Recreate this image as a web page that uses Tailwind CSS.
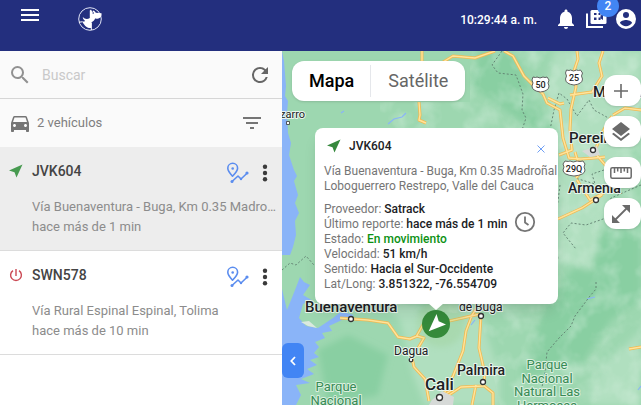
<!DOCTYPE html>
<html lang="es">
<head>
<meta charset="utf-8">
<meta name="viewport" content="width=device-width, initial-scale=1">
<title>Satrack</title>
<script src="https://cdn.jsdelivr.net/npm/@tailwindcss/browser@4"></script>
</head>
<body class="flex h-screen flex-col overflow-hidden bg-white font-[Roboto,sans-serif]">
<svg class="hidden" aria-hidden="true">
  <symbol id="nav" viewBox="0 0 14 14"><path d="M13.500.5 0 6.500l5.500 1.700L7.500 13.500z"/></symbol>
  <symbol id="route" viewBox="0 0 24 24"><g fill="none" stroke="currentColor" stroke-width="1.600" stroke-linecap="round" stroke-linejoin="round"><path d="M7.500 15.200C4.200 11.500 2.800 9.300 2.800 7.200a4.900 4.900 0 0 1 9.800 0c0 2.100-1.800 4.600-5.100 8z"/><path d="M7 20.500l6-5.500 3 3 6.300-6"/></g><g fill="currentColor"><circle cx="7.700" cy="7.500" r="1.300"/><circle cx="7" cy="20.500" r="1.500"/><circle cx="22" cy="12" r="1.600"/><circle cx="16" cy="18" r="1.200"/></g></symbol>
  <symbol id="dots" viewBox="0 0 24 24"><circle cx="12" cy="5.800" r="2.200"/><circle cx="12" cy="12" r="2.200"/><circle cx="12" cy="18.200" r="2.200"/></symbol>
</svg>

<header class="relative z-10 flex h-[51px] shrink-0 items-start bg-[#232f7e] pt-[7px] pr-[3px] pl-[18px] text-white">
  <button aria-label="Menú" class="-mt-1"><svg class="size-6" viewBox="0 0 24 24" fill="currentColor"><path d="M3 18h18v-2H3zm0-5h18v-2H3zm0-7v2h18V6z"/></svg></button>
  <a href="#" aria-label="Inicio" class="ml-9"><svg class="size-6" viewBox="0 0 24 24"><circle cx="12" cy="12" r="11.300" fill="none" stroke="#dfe3f5" stroke-width="1"/><path fill="#fff" d="M11.800 3.500 13 2.600l1.500 2.700.5-1.800c1.200.3 2.200 1.200 2.800 2.200l5.700.6c.3 1.800-.2 3.200-1.200 4.200-1.500 1.200-3.500 1.400-5.200 1.100-.6 1.800-2 3-3.600 3.800l-.2 5.600c-2.800.2-4.700-.6-6-2-1.400-1.500-2.200-3.300-3.300-4.500 1.300.2 2.400 0 3.100-.6-1.400-1-2.200-2.300-2.300-3.900 1.700 2 4.500 2.600 7 1z"/><path d="M13.300 16v7M1 15.200l3.300-.4" stroke="#fff" stroke-width="1"/><circle cx="15.200" cy="6" r=".8" fill="#232f7e"/></svg></a>
  <time class="mt-[5px] ml-auto text-xs leading-4 font-medium">10:29:44 a. m.</time>
  <div class="ml-[17px] flex gap-[6px]">
    <button aria-label="Notificaciones"><svg class="size-6" viewBox="0 0 24 24" fill="currentColor"><path d="M12 22c1.100 0 2-.9 2-2h-4c0 1.100.89 2 2 2zm6-6v-5c0-3.070-1.640-5.640-4.500-6.320V4c0-.83-.67-1.500-1.500-1.500s-1.500.67-1.500 1.500v.68C7.630 5.360 6 7.920 6 11v5l-2 2v1h16v-1z"/></svg></button>
    <button aria-label="Videos, 2 nuevos" class="relative"><svg class="size-6" viewBox="0 0 24 24"><path fill="none" stroke="currentColor" stroke-width="2" d="M3 6.500v13.500h16"/><path fill="currentColor" d="M8 3h13a1.500 1.500 0 0 1 1.500 1.500v11A1.500 1.500 0 0 1 21 17H8a1.500 1.500 0 0 1-1.500-1.500v-11A1.500 1.500 0 0 1 8 3z"/><path fill="#232f7e" d="M10 6h6.500v2.700L19 7v6l-2.500-1.700V13H10z"/><path fill="currentColor" d="M10 8h2.500V6h2v2h2v2.500h-2V13h-2v-2.500H10z"/></svg><span class="absolute -top-3 left-[13px] flex size-[22px] items-center justify-center rounded-full bg-[#4285f4] text-xs font-medium">2</span></button>
    <button aria-label="Cuenta"><svg class="size-6" viewBox="0 0 24 24" fill="currentColor"><path d="M12 2a10 10 0 1 0 0 20 10 10 0 0 0 0-20zm0 3a3 3 0 1 1 0 6 3 3 0 0 1 0-6zm0 14.200c-2.500 0-4.710-1.280-6-3.220.03-1.990 4-3.080 6-3.080 1.990 0 5.970 1.090 6 3.080-1.290 1.940-3.500 3.220-6 3.220z"/></svg></button>
  </div>
</header>

<div class="flex min-h-0 flex-1">
  <aside class="flex w-[282px] shrink-0 flex-col bg-white">
    <form class="flex h-12 items-center border-b border-[#d6d6d6] bg-[#fafafa] pr-[10px] pl-2">
      <label for="q" aria-label="Buscar"><svg class="size-6" viewBox="0 0 24 24" fill="#919191"><path d="M15.500 14h-.79l-.28-.27A6.471 6.471 0 0 0 16 9.500 6.500 6.500 0 1 0 9.500 16c1.610 0 3.090-.59 4.230-1.570l.27.28v.79l5 4.990L20.490 19l-4.990-5zm-6 0C7.010 14 5 11.990 5 9.500S7.010 5 9.500 5 14 7.010 14 9.500 11.990 14 9.500 14z"/></svg></label>
      <input id="q" type="search" placeholder="Buscar" class="ml-[10px] min-w-0 flex-1 bg-transparent text-sm text-[#666] outline-none placeholder:text-[#c9c9c9]">
      <button type="button" aria-label="Actualizar"><svg class="size-6" viewBox="0 0 24 24" fill="#666"><path d="M17.650 6.350A7.958 7.958 0 0 0 12 4a8 8 0 1 0 7.730 10h-2.080A5.990 5.990 0 0 1 12 18c-3.310 0-6-2.690-6-6s2.690-6 6-6c1.660 0 3.140.69 4.220 1.780L13 11h7V4z"/></svg></button>
    </form>
    <div class="flex h-12 items-center bg-[#fafafa] pr-[18px] pl-2">
      <svg class="size-6" viewBox="0 0 24 24" fill="#757575"><path d="M18.920 6.010C18.720 5.420 18.160 5 17.500 5h-11c-.66 0-1.210.42-1.420 1.010L3 12v8c0 .55.45 1 1 1h1c.55 0 1-.45 1-1v-1h12v1c0 .55.45 1 1 1h1c.55 0 1-.45 1-1v-8zM6.500 16c-.83 0-1.500-.67-1.500-1.500S5.670 13 6.500 13s1.500.67 1.500 1.500S7.330 16 6.500 16zm11 0c-.83 0-1.500-.67-1.500-1.500s.67-1.500 1.500-1.500 1.500.67 1.500 1.500-.67 1.500-1.500 1.500zM5 11l1.500-4.500h11L19 11z"/></svg>
      <span class="ml-[5px] text-[13px] text-[#808080]">2 vehículos</span>
      <button aria-label="Filtrar" class="ml-auto"><svg class="size-6" viewBox="0 0 24 24" fill="#757575"><path d="M10 18h4v-2h-4zM3 6v2h18V6zm3 7h12v-2H6z"/></svg></button>
    </div>
    <ul>
      <li class="flex h-[104px] flex-col border-b border-[#dcdcdc] bg-[#ededed] pt-[10px] pr-[5px] pl-[9px]">
        <div class="flex items-center">
          <svg class="size-[14px]" fill="#479a50"><use href="#nav"/></svg>
          <h2 class="ml-[9px] text-sm font-medium text-[#444]">JVK604</h2>
          <button aria-label="Recorrido de JVK604" class="mt-1 ml-auto text-[#5b8def]"><svg class="size-6"><use href="#route"/></svg></button>
          <button aria-label="Opciones de JVK604" class="mt-1 ml-1"><svg class="size-6" fill="#3a3a3a"><use href="#dots"/></svg></button>
        </div>
        <div class="mt-3 ml-[23px] text-[13px] leading-5 text-[#8c8c8c]"><p class="truncate">Vía Buenaventura - Buga, Km 0.35 Madroñal</p><p>hace más de 1 min</p></div>
      </li>
      <li class="flex h-[104px] flex-col border-b border-[#dcdcdc] bg-white pt-[10px] pr-[5px] pl-[9px]">
        <div class="flex items-center">
          <svg class="size-[14px]" viewBox="0 0 14 14" fill="none" stroke="#cb4a55" stroke-width="1.400"><path d="M7 1v7M4 2.600a5.400 5.400 0 1 0 6 0"/></svg>
          <h2 class="ml-[9px] text-sm font-medium text-[#444]">SWN578</h2>
          <button aria-label="Recorrido de SWN578" class="mt-1 ml-auto text-[#5b8def]"><svg class="size-6"><use href="#route"/></svg></button>
          <button aria-label="Opciones de SWN578" class="mt-1 ml-1"><svg class="size-6" fill="#3a3a3a"><use href="#dots"/></svg></button>
        </div>
        <div class="mt-3 ml-[23px] text-[13px] leading-5 text-[#8c8c8c]"><p class="truncate">Vía Rural Espinal Espinal, Tolima</p><p>hace más de 10 min</p></div>
      </li>
    </ul>
  </aside>

  <main class="relative min-w-0 flex-1 overflow-hidden bg-[#9dd7b0]">
    <svg class="absolute inset-0 h-full w-full" viewBox="282 51 359 354" preserveAspectRatio="xMinYMin slice" role="img" aria-label="Mapa del Valle del Cauca">
      <defs>
        <filter id="relief" x="0" y="0" width="100%" height="100%"><feTurbulence type="fractalNoise" baseFrequency=".05 .045" numOctaves="3" seed="8" result="n"/><feColorMatrix values="0 0 0 0 .78  0 0 0 0 .92  0 0 0 0 .83  2 0 0 0 -.85"/><feComposite in2="SourceAlpha" operator="in"/></filter>
        <filter id="soft" x="-20%" y="-20%" width="140%" height="140%"><feGaussianBlur stdDeviation="3"/></filter>
      </defs>
      <path fill="#9dd7b0" d="M282 51h359v354H282z"/>
      <g filter="url(#soft)">
        <path fill="#89cfa2" d="M480 51l34 0 20 50 20 30-14 4-70-50zM606 225l35-15v90l-30 20-30 45-40 10h-20l25-70zM555 310l20-30 20 20-20 50-30 20-20-10zM318 350l30-15 40 20-10 40-50 10z"/>
        <path fill="#b0dfbf" d="M555 51h86v80l-30 60-20 80-33-10V130l-14-40zM400 320l50-15 30 10 20 60v30h-75l-12-30zM600 370l41-40v75h-50zM380 300l40 5-6 30z"/>
      </g>
      <path opacity=".4" filter="url(#relief)" d="M470 51h171v354H500l-20-90-60-5-40-10V102h90z"/>
      <path fill="#8ab4f8" d="M282 51l2 10 2 25-1 10 3 5-1 12 1 20 3 10-2 12 5 15 3 6-3 5 4 14-3 8 4 10-4 8 1 14-3 12-11 30z"/>
      <path fill="#9dd7b0" d="M282 255h33v34h-33z"/>
      <path fill="#8ab4f8" d="M282 289l5 21 8-20 5-13 4 5 6 3-7 10 12 7 8 5 31 8-12 5-13 6 3 5-10 2 3 5-10 4 4 5-5 6 5 4-9 3 7 5-10 4 7 5-13 5 9 4-14 2 5 10-7 14-8 9v10h-10z"/>
      <path fill="#9dd7b0" d="M303 304l8-4 12 3 20 7-10 8-15 10-12-2-7-8z"/>
      <path d="M301 322l7 4 9 2-8-7z" fill="#dbe9df"/>
      <g fill="none" stroke="#8ab4f8" stroke-width="1.200"><path d="M388 124l6-5 8-2 4-4M341 113l3-2M471 325l4-5M587 299l8-2M638 390l3-4"/></g>
      <g fill="none" stroke="#5f7d6e" stroke-width=".9" stroke-dasharray="2 2"><path d="M502 51l-10 14 6 8 18 2 7 19-1 16 4 8-4 12-2 14M550 130l4-20 5-17 8 6 10 17 12-16 5 10 18 10M604 170l-12 4 3 10-20-6M596 282v7l-6 7-15 20-4 10-12 12-12 14-2 20-5 25M282 270l8-7 6 2 10-9 8 9M641 185l-30 13-5 20-20 7-15-2-8 10 13 16M560 185l-5 40 3 35"/></g>
      <g fill="none" stroke="#f2ba52" stroke-width="3" stroke-linejoin="round"><path id="road" d="M422 51v13M419 102l1 13-1 5 7 3M443 62l10-6 22 2 20-7M504 51l9 5 11 20 10 10 9 8 4 9 13 7 3 28 6 20 12 1 13-1 11-1M577 51l1 8-4 12 2 16-5 22-1 20 2 21-13 5M603 51l-4 12 3 13-10 16-22 3M613 115l12-7 16 2M612 116l-9 15-9 22M548 98l12 6 4-1M594 152l13 15 10 5M575 152l6 20-5 6M602 195l-20 13-24 11M577 180l13 20 14-7M340 318l28 2 20 3 10 14 12 2 7-3 7 2-6 10M416 337l8-14M449 321l31-7M412 358l2 9 11 12 4 22M441 400l12-24 10-25 3-20 6-16 7-10M481 315l-2 33 6 26-2 12-22 1-15 10M483 385l10 8v12M476 385l-4 20M629 349l12-2M436 405l5-8 11-7"/></g>
      <use href="#road" fill="none" stroke="#ffe49b" stroke-width="1.400"/>
      <path fill="#d6d9d7" d="M582 151l15-5 3 9-10 2zM432 400l10-9 12 6-1 8h-24z"/>
      <circle cx="441" cy="323" r="24" fill="#8cc272" opacity=".2" filter="url(#soft)"/>
      <g fill="#fff" stroke="#333" stroke-width="1.300"><circle cx="351" cy="319" r="2.500"/><circle cx="411" cy="360" r="1.800"/><circle cx="439.500" cy="397.500" r="3"/><circle cx="481" cy="316" r="2.500"/><circle cx="483" cy="382" r="2.500"/><circle cx="593" cy="150" r="2.500"/><circle cx="596" cy="200" r="2.500"/><path stroke-width=".8" d="M286.500 121.500h3v3h-3z"/></g>
      <g class="font-[Roboto,sans-serif]" fill="#202124" stroke="#e9f6ed" stroke-width="2" stroke-linejoin="round" style="paint-order:stroke">
        <text x="280" y="118" font-size="11">zarro</text>
        <g font-weight="500"><text x="305" y="312" font-size="15">Buenaventura</text><text x="457" y="375" font-size="14">Palmira</text><text x="425" y="390" font-size="17">Cali</text><text x="569" y="143" font-size="15">Pereira</text><text x="568" y="193" font-size="14">Armenia</text><text x="593" y="97" font-size="15">Manizales</text></g>
        <text x="394" y="355" font-size="12">Dagua</text><text x="459" y="311" font-size="12">de Buga</text>
        <g fill="#378a55" stroke="#d9f0df" font-size="13" text-anchor="middle"><text x="336" y="391">Parque</text><text x="336" y="405">Nacional</text><text x="547" y="369">Parque</text><text x="547" y="383">Nacional</text><text x="547" y="396">Natural Las</text><text x="547" y="410">Hermosas</text></g>
      </g>
      <g fill="#fff" stroke="#555" stroke-width=".9"><path d="M533 77q3 1 4 0 3 2 6 0 2 1 4 0l2 3q-2 3 0 6 0 5-8.500 6Q532 91 532 86q2-3 0-6z"/><path d="M566.500 70q3 1 4 0 3 2 6 0 2 1 4 0l2 3q-2 3 0 6 0 5-8.500 6-8.500-1-8.500-6 2-3 0-6z"/><path d="M565 161q4 1 5 0 3 2 7 0 3 1 6 0l2 3q-2 3 0 6 0 5-11 6-11-1-11-6 2-3 0-6z"/></g>
      <g class="font-[Roboto,sans-serif]" fill="#222" font-size="9" font-weight="500" text-anchor="middle"><text x="540.500" y="88">50</text><text x="574" y="81">25</text><text x="574" y="172">29Q</text></g>
    </svg>

    <div class="absolute top-[10px] left-[10px] flex h-10 items-center rounded-xl bg-white text-lg shadow-sm">
      <button class="h-8 border-r border-gray-200 px-4 pl-[17px] font-medium text-black">Mapa</button>
      <button class="h-8 px-[17px] text-[#666]">Satélite</button>
    </div>

    <nav aria-label="Herramientas del mapa" class="absolute top-6 right-0 flex flex-col gap-[10px] text-[#6a6a6a]">
      <button aria-label="Acercar" class="flex h-[31px] w-[37px] items-center justify-center rounded-xl bg-white pr-[3px] shadow"><svg class="size-[14px]" viewBox="0 0 14 14"><path stroke="currentColor" stroke-width="1.600" d="M7 0v14M0 7h14"/></svg></button>
      <button aria-label="Capas" class="flex h-[31px] w-[37px] items-center justify-center rounded-xl bg-white pr-[3px] shadow"><svg class="size-6" viewBox="0 0 24 24" fill="currentColor"><path d="M12 18.540l-7.370-5.730L3 14.070l9 7 9-7-1.630-1.270zM12 16l7.360-5.730L21 9l-9-7-9 7 1.630 1.270z"/></svg></button>
      <button aria-label="Medir" class="flex h-[31px] w-[37px] items-center justify-center rounded-xl bg-white pr-[3px] shadow"><svg class="h-3 w-[22px]" viewBox="0 0 22 12" fill="none" stroke="currentColor" stroke-width="1.500"><rect x=".8" y=".8" width="20.400" height="10.400" rx="1.500"/><path d="M4.500 1v5M7.700 1v3.500M11 1v5M14.300 1v3.500M17.500 1v5"/></svg></button>
      <button aria-label="Pantalla completa" class="flex h-[31px] w-[37px] items-center justify-center rounded-xl bg-white pr-[3px] shadow"><svg class="size-[18px]" viewBox="0 0 18 18"><path d="M3 15 15 3" stroke="currentColor" stroke-width="1.800"/><path fill="currentColor" d="M10 0h8v8l-3-3-2-2zM0 10v8h8l-3-3-2-2z"/></svg></button>
    </nav>

    <button aria-label="Ocultar panel" class="absolute top-[292px] left-0 flex h-[35px] w-[22px] items-center justify-center rounded-md bg-[#4285f4]"><svg class="h-[10px] w-[6px]" viewBox="0 0 6 10"><path fill="none" stroke="#fff" stroke-width="1.800" d="M5 1 1.300 5 5 9"/></svg></button>

    <svg class="absolute top-[259px] left-[140px] size-7" viewBox="0 0 28 28" role="img" aria-label="Vehículo JVK604"><circle cx="14" cy="14" r="14" fill="#358a3a"/><path fill="#fff" d="M14.500 4 16.700 11.300 24 14.500 6.700 21.300z"/></svg>

    <article class="absolute top-[77px] left-[33px] w-[243px] rounded-lg bg-white px-[9px] pt-2 pb-3 text-xs leading-[15px] text-[#757575] shadow-lg">
      <div class="flex h-5 items-center"><svg class="ml-[3px] size-[14px]" fill="#36883d"><use href="#nav"/></svg><h3 class="ml-2 font-medium text-[#202124]">JVK604</h3><button aria-label="Cerrar" class="mt-[6px] mr-1 ml-auto"><svg class="size-2" viewBox="0 0 8 8"><path stroke="#6f9ff5" d="m.5.5 7 7m0-7-7 7"/></svg></button></div>
      <p class="mt-2 -mr-[9px] whitespace-nowrap">Vía Buenaventura - Buga, Km 0.35 Madroñal<br>Loboguerrero Restrepo, Valle del Cauca</p>
      <div class="mt-2 flex items-start">
        <dl>
          <div class="flex gap-[3px]"><dt>Proveedor:</dt><dd class="font-medium text-[#202124]">Satrack</dd></div>
          <div class="flex gap-[3px]"><dt>Último reporte:</dt><dd class="font-medium text-[#202124]">hace más de 1 min</dd></div>
          <div class="flex gap-[3px]"><dt>Estado:</dt><dd class="font-medium text-[#0c9114]">En movimiento</dd></div>
          <div class="flex gap-[3px]"><dt>Velocidad:</dt><dd class="font-medium text-[#202124]">51 km/h</dd></div>
          <div class="flex gap-[3px]"><dt>Sentido:</dt><dd class="font-medium text-[#202124]">Hacia el Sur-Occidente</dd></div>
          <div class="flex gap-[3px]"><dt>Lat/Long:</dt><dd class="font-medium text-[#202124]">3.851322, -76.554709</dd></div>
        </dl>
        <button aria-label="Historial" class="mt-2 ml-[6px]"><svg class="size-6" viewBox="0 0 24 24" fill="none" stroke="#757575" stroke-width="1.800"><circle cx="12" cy="12" r="9.200"/><path d="M12 6.500V12.500l3.500 2.500"/></svg></button>
      </div>
      <svg class="absolute -bottom-[6px] left-[113px] h-[7px] w-4" viewBox="0 0 16 7"><path fill="#fff" d="M0 0h16L8 7z"/></svg>
    </article>
  </main>
</div>
</body>
</html>
